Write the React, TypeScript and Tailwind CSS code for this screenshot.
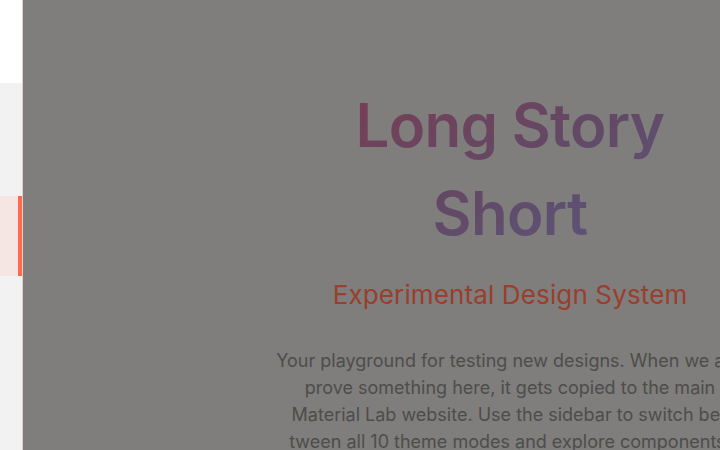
import React from "react";

export default function App() {
  return (
    <div className="w-[720px] h-[450px] flex overflow-hidden font-['Inter',sans-serif]">
      <aside className="w-[23px] shrink-0 flex flex-col bg-[#f2f2f2] border-r border-[#dccfcc]">
        <div className="h-[83px] bg-white" />
        <div className="h-[113px]" />
        <div className="h-[80px] bg-[#f5e6e3] border-r-4 border-[#ff6b4a]" />
      </aside>
      <main className="flex-1 relative bg-[#d4d2cf] overflow-hidden">
        <div className="w-[974px] flex flex-col items-center pt-[81px] text-center">
          <h1 className="text-[60px] leading-[88px] font-semibold tracking-[-0.012em] bg-gradient-to-br from-[#c8668c] via-[#a57aa8] to-[#9393d8] bg-clip-text text-transparent w-[320px]">
            Long Story Short
          </h1>
          <h2 className="mt-[21px] text-[26px] leading-[34px] tracking-[0.005em] text-[#fd694b]">
            Experimental Design System
          </h2>
          <p className="mt-[35px] text-[18px] leading-[27px] text-[#82807d] whitespace-nowrap">
            <span className="block">Your playground for testing new designs. When we ap-</span>
            <span className="block">prove something here, it gets copied to the main</span>
            <span className="block">Material Lab website. Use the sidebar to switch be-</span>
            <span className="block">tween all 10 theme modes and explore components.</span>
          </p>
        </div>
        <div className="absolute inset-0 bg-black/40" />
      </main>
    </div>
  );
}
